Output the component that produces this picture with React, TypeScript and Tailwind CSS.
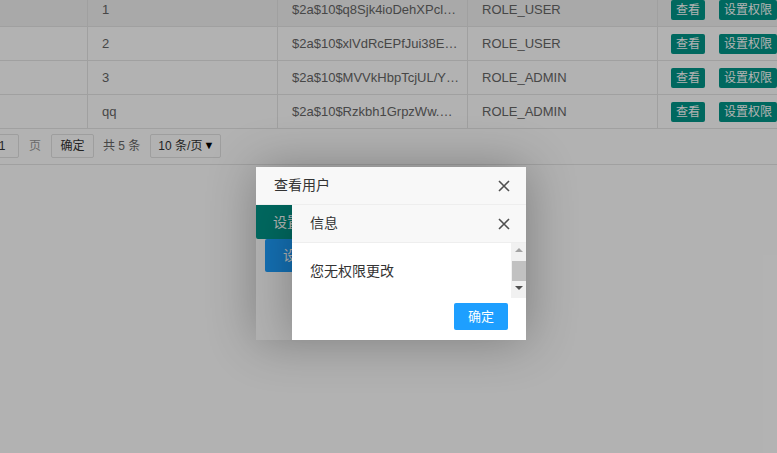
import React from 'react';

const users = [
  { name: '1', hash: '$2a$10$q8Sjk4ioDehXPcl…', role: 'ROLE_USER', hover: true },
  { name: '2', hash: '$2a$10$xlVdRcEPfJui38E…', role: 'ROLE_USER' },
  { name: '3', hash: '$2a$10$MVVkHbpTcjUL/Y…', role: 'ROLE_ADMIN' },
  { name: 'qq', hash: '$2a$10$Rzkbh1GrpzWw.…', role: 'ROLE_ADMIN' },
];

const CloseIcon = () => (
  <svg width="12" height="12" viewBox="0 0 12 12" className="block">
    <path d="M1 1 L11 11 M11 1 L1 11" stroke="#505050" strokeWidth="1.6" fill="none" />
  </svg>
);

const font = { fontFamily: '"Liberation Sans", Arial, "Noto Sans CJK SC", sans-serif' };

const App: React.FC = () => {
  return (
    <div className="relative w-full h-[453px] overflow-hidden bg-white text-[#666]" style={font}>
      {/* table */}
      <div className="-mt-[7px]">
        {users.map((u) => (
          <div
            key={u.name}
            className={`flex h-[34px] border-b border-[#e6e6e6] text-[13px] ${u.hover ? 'bg-[#f2f2f2]' : ''}`}
          >
            <div className="w-[88px] shrink-0 border-r border-[#e6e6e6]" />
            <div className="w-[190px] shrink-0 border-r border-[#e6e6e6] pl-[14px] flex items-center">{u.name}</div>
            <div className="w-[190px] shrink-0 border-r border-[#e6e6e6] pl-[14px] flex items-center whitespace-nowrap overflow-hidden">
              {u.hash}
            </div>
            <div className="w-[190px] shrink-0 border-r border-[#e6e6e6] pl-[14px] flex items-center">{u.role}</div>
            <div className="flex-1 flex items-center pl-[13px] gap-[14px] whitespace-nowrap">
              <span className="h-[20px] px-[5px] flex items-center bg-[#009688] text-white text-[12px] rounded-[2px]">查看</span>
              <span className="h-[20px] px-[5px] flex items-center bg-[#009688] text-white text-[12px] rounded-[2px]">设置权限</span>
            </div>
          </div>
        ))}
      </div>

      {/* pagination */}
      <div className="h-[36px] border-b border-[#e6e6e6] flex items-center text-[12px] whitespace-nowrap pb-[1px]">
        <div className="-ml-[15px] w-[34px] h-[24px] border border-[#e2e2e2] rounded-[2px] flex items-center justify-center text-[#333]">
          1
        </div>
        <span className="ml-[10px] text-[#999]">页</span>
        <div className="ml-[10px] w-[43px] h-[24px] border border-[#e2e2e2] rounded-[2px] flex items-center justify-center text-[#333]">
          确定
        </div>
        <span className="ml-[9px]">共 5 条</span>
        <div className="ml-[10px] w-[71px] h-[24px] border border-[#e2e2e2] rounded-[2px] flex items-center pl-[7px] text-[#333] relative">
          10 条/页
          <span className="absolute right-[6px] top-[4px] text-[11px] leading-[12px] text-black">▼</span>
        </div>
      </div>

      {/* page shade */}
      <div className="absolute inset-0 bg-black/30" />

      {/* outer layer */}
      <div className="absolute left-[256px] top-[167px] w-[270px] h-[173px] bg-white shadow-[1px_1px_50px_rgba(0,0,0,0.3)] rounded-[2px] flex flex-col">
        <div className="h-[38px] shrink-0 bg-[#f8f8f8] border-b border-[#eee] flex items-center justify-between pl-[18px] pr-[16px] text-[14px] text-[#333]">
          <span>查看用户</span>
          <CloseIcon />
        </div>
        <div className="relative flex-1 overflow-hidden bg-white">
          <div className="w-[36px] overflow-hidden">
            <div className="w-[80px] h-[34px] bg-[#009688] text-white text-[14px] flex items-center pl-[17px] rounded-bl-[2px] whitespace-nowrap">
              设置
            </div>
            <div className="ml-[9px] w-[80px] h-[33px] bg-[#1e9fff] text-white text-[14px] flex items-center pl-[18px] rounded-[2px] whitespace-nowrap">
              设
            </div>
          </div>
          <div className="absolute inset-0 bg-black/30" />

          {/* inner layer */}
          <div className="absolute left-[36px] top-0 w-[234px] h-[135px] bg-white flex flex-col shadow-[1px_1px_50px_rgba(0,0,0,0.3)]">
            <div className="h-[38px] shrink-0 bg-[#f8f8f8] border-b border-[#eee] flex items-center justify-between pl-[18px] pr-[16px] text-[14px] text-[#333]">
              <span>信息</span>
              <CloseIcon />
            </div>
            <div className="h-[55px] shrink-0 flex">
              <div className="flex-1 pl-[18px] pt-[18px] text-[14px] leading-[20px] text-[#333]">您无权限更改</div>
              <div className="w-[15px] bg-[#f1f1f1] flex flex-col items-center">
                <div className="mt-[5px] w-0 h-0 border-l-[4px] border-r-[4px] border-b-[4px] border-l-transparent border-r-transparent border-b-[#a3a3a3]" />
                <div className="mt-[9px] w-[14px] h-[20px] bg-[#c1c1c1]" />
                <div className="mt-[5px] w-0 h-0 border-l-[4px] border-r-[4px] border-t-[4px] border-l-transparent border-r-transparent border-t-[#505050]" />
              </div>
            </div>
            <div className="flex justify-end pr-[18px] pt-[5px]">
              <div className="w-[54px] h-[27px] bg-[#1e9fff] rounded-[2px] text-white text-[13px] flex items-center justify-center">
                确定
              </div>
            </div>
          </div>
        </div>
      </div>
    </div>
  );
};

export default App;
